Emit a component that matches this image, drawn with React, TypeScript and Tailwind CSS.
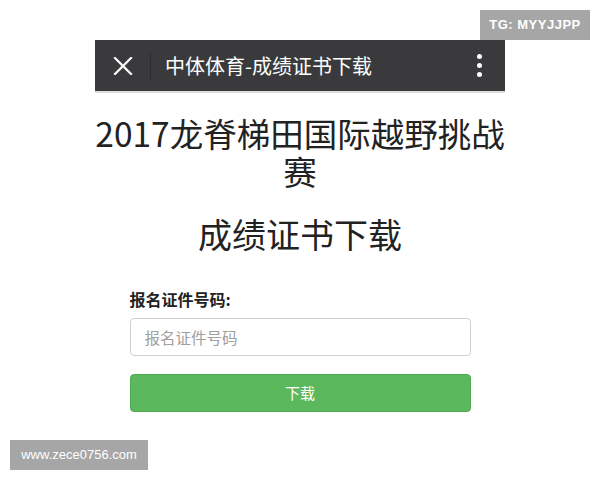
const cjk = "font-['Noto_Sans_CJK_SC','Noto_Sans',sans-serif]";

function TopBar() {
  return (
    <div className="flex h-[53px] w-[410px] items-center bg-[#3a3a3c] border-b-2 border-[#dcdcdc]">
      <div className="flex w-[55px] items-center justify-center">
        <svg width="20" height="18" viewBox="0 0 20 18" fill="none" stroke="#fff" strokeWidth="2.2" strokeLinecap="square">
          <line x1="2" y1="1" x2="18" y2="17" />
          <line x1="18" y1="1" x2="2" y2="17" />
        </svg>
      </div>
      <div className="h-[26px] w-px bg-[#2c2c2e]" />
      <div className="flex-1 pl-[14px] text-[20px] text-white">中体体育-成绩证书下载</div>
      <div className="flex w-[52px] flex-col items-center gap-[4px]">
        <span className="size-[5px] rounded-full bg-white" />
        <span className="size-[5px] rounded-full bg-white" />
        <span className="size-[5px] rounded-full bg-white" />
      </div>
    </div>
  );
}

export default function App() {
  return (
    <div className={`relative flex h-[480px] w-[600px] flex-col items-center bg-white pt-[40px] ${cjk}`}>
      <TopBar />

      <h1 className="mt-[21px] w-[410px] text-center text-[33.5px] leading-[38px] font-normal text-[#222]">
        2017龙脊梯田国际越野挑战赛
      </h1>
      <h2 className="mt-[25px] text-center text-[34px] leading-[38px] font-normal text-[#222]">
        成绩证书下载
      </h2>

      <div className="mt-[36px] flex w-[341px] flex-col">
        <label className="text-[16px] leading-[20px] font-bold text-[#222]">报名证件号码:</label>
        <input
          placeholder="报名证件号码"
          className="mt-[9px] h-[38px] rounded-[4px] border border-[#cfcfcf] px-[14px] text-[15.5px] placeholder:text-[#a0a0a0] outline-none"
        />
        <button className="mt-[18px] h-[38px] rounded-[4px] border border-[#4fa94f] bg-[#5cb85c] text-[15px] text-white">
          下载
        </button>
      </div>

      <div className="absolute left-[480px] top-[10px] flex h-[30px] w-[110px] items-center justify-center bg-[#a6a6a6] font-['Liberation_Sans',sans-serif] text-[13px] font-bold tracking-[0.5px] text-white">
        TG: MYYJJPP
      </div>
      <div className="absolute left-[10px] top-[440px] flex h-[30px] w-[138px] items-center justify-center bg-[#a6a6a6] font-['Liberation_Sans',sans-serif] text-[13px] text-white">
        www.zece0756.com
      </div>
    </div>
  );
}
